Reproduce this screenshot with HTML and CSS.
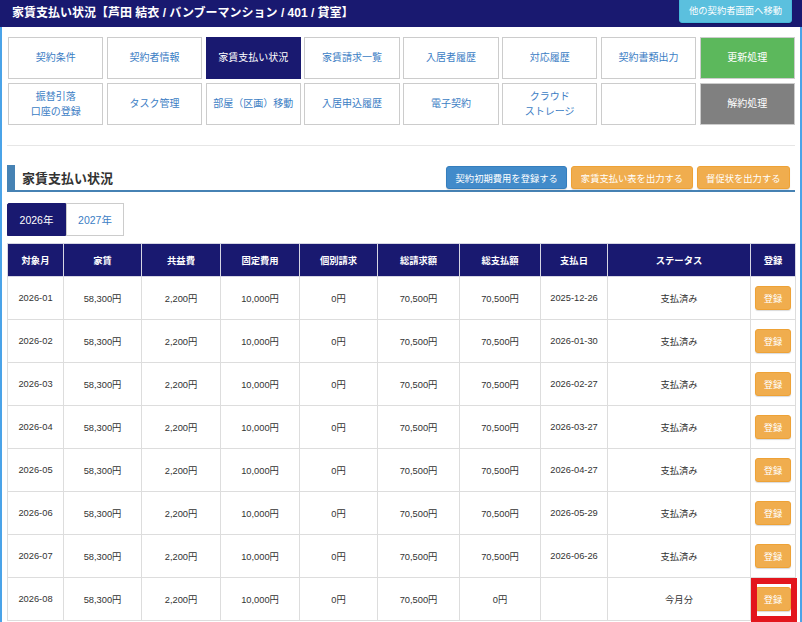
FILE: index.html
```html
<!DOCTYPE html>
<html lang="ja">
  <head>
    <meta charset="UTF-8" />
    <meta name="viewport" content="width=device-width, initial-scale=1.0" />
    <title>家賃支払い状況</title>
    <link rel="stylesheet" href="styles.css">
  </head>
  <body>
    <header class="top-bar">
      <h1 class="top-title">家賃支払い状況【芦田 結衣 / バンブーマンション / 401 / 貸室】</h1>
      <button class="btn btn-info">他の契約者画面へ移動</button>
    </header>

    <div class="page">
      <nav class="menu">
        <a class="menu-item">契約条件</a>
        <a class="menu-item">契約者情報</a>
        <a class="menu-item active">家賃支払い状況</a>
        <a class="menu-item">家賃請求一覧</a>
        <a class="menu-item">入居者履歴</a>
        <a class="menu-item">対応履歴</a>
        <a class="menu-item">契約書類出力</a>
        <a class="menu-item renew">更新処理</a>
        <a class="menu-item">振替引落<br>口座の登録</a>
        <a class="menu-item">タスク管理</a>
        <a class="menu-item">部屋（区画）移動</a>
        <a class="menu-item">入居申込履歴</a>
        <a class="menu-item">電子契約</a>
        <a class="menu-item">クラウド<br>ストレージ</a>
        <span class="menu-item"></span>
        <a class="menu-item cancel">解約処理</a>
      </nav>

      <hr class="divider">

      <div class="section-head">
        <h2 class="section-title">家賃支払い状況</h2>
        <div class="section-actions">
          <button class="btn btn-primary">契約初期費用を登録する</button>
          <button class="btn btn-warning">家賃支払い表を出力する</button>
          <button class="btn btn-warning">督促状を出力する</button>
        </div>
      </div>

      <div class="year-tabs">
        <a class="year-tab current">2026年</a>
        <a class="year-tab">2027年</a>
      </div>

      <table class="pay-table">
        <thead>
          <tr>
            <th class="w-month">対象月</th>
            <th class="w-rent">家賃</th>
            <th class="w-common">共益費</th>
            <th class="w-fixed">固定費用</th>
            <th class="w-each">個別請求</th>
            <th class="w-total">総請求額</th>
            <th class="w-paid">総支払額</th>
            <th class="w-date">支払日</th>
            <th class="w-status">ステータス</th>
            <th class="w-reg">登録</th>
          </tr>
        </thead>
        <tbody id="payRows"></tbody>
      </table>
    </div>

    <script>
      const rows = [
        ["2026-01", "70,500円", "2025-12-26", "支払済み"],
        ["2026-02", "70,500円", "2026-01-30", "支払済み"],
        ["2026-03", "70,500円", "2026-02-27", "支払済み"],
        ["2026-04", "70,500円", "2026-03-27", "支払済み"],
        ["2026-05", "70,500円", "2026-04-27", "支払済み"],
        ["2026-06", "70,500円", "2026-05-29", "支払済み"],
        ["2026-07", "70,500円", "2026-06-26", "支払済み"],
        ["2026-08", "0円", "", "今月分"],
      ];
      const tbody = document.getElementById("payRows");

      rows.forEach((r, i) => {
        const last = i === rows.length - 1;
        const tr = document.createElement("tr");
        tr.innerHTML =
          "<td>" + r[0] + "</td>" +
          "<td>58,300円</td><td>2,200円</td><td>10,000円</td><td>0円</td><td>70,500円</td>" +
          "<td>" + r[1] + "</td><td>" + r[2] + "</td><td>" + r[3] + "</td>" +
          '<td class="reg-cell">' + (last ? '<span class="mark"></span>' : "") +
          '<button class="btn btn-warning btn-reg">登録</button></td>';
        tbody.appendChild(tr);
      });
    </script>
  </body>
</html>
```

FILE: styles.css
```css
body {
  margin: 0;
  font-family: "Liberation Sans", "Noto Sans CJK JP", sans-serif;
  color: #333;
  background: #fff;
}

/* top bar */
.top-bar {
  display: flex;
  justify-content: space-between;
  align-items: flex-start;
  height: 27px;
  background-color: #191970;
  padding: 0 10px 0 12px;
}

.top-title {
  margin: 0;
  font-size: 12px;
  font-weight: bold;
  color: #fff;
  line-height: 27px;
}

.btn {
  font-family: inherit;
  color: #fff;
  border: 1px solid transparent;
  border-radius: 3px;
  height: 23px;
  padding: 0 8.5px;
  font-size: 9.3px;
  cursor: pointer;
  box-shadow: 0 1px 1px rgba(0, 0, 0, 0.15);
}

.btn-info {
  background-color: #5bc0de;
  border-color: #46b8da;
  height: 26px;
  margin-top: -3px;
  padding: 0 9px;
}

.btn-primary {
  background-color: #428bca;
  border-color: #357ebd;
}

.btn-warning {
  background-color: #f0ad4e;
  border-color: #eea236;
}

/* page frame */
.page {
  border-left: 2px solid #4aa3e8;
  border-right: 2px solid #4aa3e8;
  padding: 10px 5px 0 5px;
  min-height: 595px;
}

.menu {
  display: grid;
  grid-template-columns: repeat(8, 1fr);
  gap: 4px 3.5px;
  margin-left: 1px;
}

.menu-item {
  display: flex;
  align-items: center;
  justify-content: center;
  box-sizing: border-box;
  height: 42px;
  border: 1px solid #ccc;
  color: #3b7dc4;
  font-size: 10px;
  line-height: 1.55;
  text-align: center;
}

.menu-item.active {
  background-color: #191970;
  border-color: #191970;
  color: #fff;
}

.menu-item.renew {
  background-color: #5cb85c;
  border-color: #ccc;
  color: #fff;
}

.menu-item.cancel {
  background-color: #808080;
  border-color: #ccc;
  color: #fff;
}

.divider {
  margin: 20px 0 0;
  border: 0;
  border-top: 1px solid #e6e6e6;
}

/* section heading */
.section-head {
  display: flex;
  justify-content: space-between;
  align-items: center;
  height: 25px;
  margin-top: 19px;
  border-left: 8px solid #4682b4;
  border-bottom: 2px solid #4682b4;
  padding: 0 5px 0 7px;
}

.section-title {
  margin: 0;
  font-size: 13px;
  font-weight: bold;
  color: #333;
}

.section-actions {
  display: flex;
  gap: 4px;
}

.year-tabs {
  display: flex;
  margin-top: 11px;
}

.year-tab {
  box-sizing: border-box;
  display: flex;
  align-items: center;
  justify-content: center;
  height: 33px;
  width: 58px;
  border: 1px solid #ccc;
  color: #3b7dc4;
  font-size: 10.5px;
}

.year-tab.current {
  width: 59px;
  background-color: #191970;
  border-color: #191970;
  border-radius: 2px 0 0 0;
  color: #fff;
}

/* table */
.pay-table {
  margin-top: 7px;
  width: 788px;
  border-collapse: collapse;
  table-layout: fixed;
  font-size: 9.3px;
}

.pay-table th {
  height: 32px;
  padding: 0;
  background-color: #191970;
  color: #fff;
  font-weight: bold;
  border: 1px solid #d6d6e4;
}

.pay-table td {
  height: 42px;
  padding: 0;
  text-align: center;
  border: 1px solid #ddd;
}

.w-month { width: 55px; }
.w-rent { width: 77px; }
.w-common { width: 78px; }
.w-fixed { width: 78px; }
.w-each { width: 77px; }
.w-total { width: 81px; }
.w-paid { width: 80px; }
.w-date { width: 66px; }
.w-status { width: 142px; }
.w-reg { width: 44px; }

.reg-cell {
  position: relative;
}

.btn-reg {
  width: 36px;
  height: 24px;
  padding: 0;
}

.mark {
  position: absolute;
  top: 0;
  left: 0;
  right: -2px;
  height: 44px;
  box-sizing: border-box;
  border: 6px solid #e3161d;
}
```
